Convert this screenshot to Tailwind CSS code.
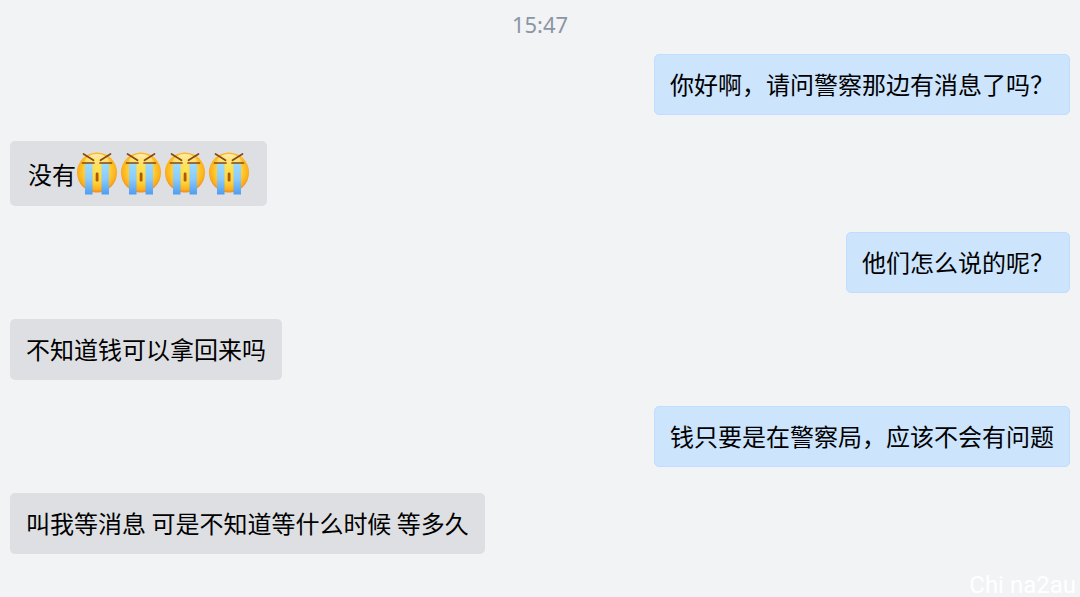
<!DOCTYPE html>
<html lang="zh-CN">
<head>
  <meta charset="utf-8">
  <meta name="viewport" content="width=device-width, initial-scale=1">
  <title>聊天</title>
  <script src="https://cdn.jsdelivr.net/npm/@tailwindcss/browser@4"></script>
</head>
<body class="bg-[#f2f3f5]">

  <!-- crying face, reused in messages -->
  <svg class="absolute w-0 h-0" aria-hidden="true">
    <defs>
      <radialGradient id="face" cx="50%" cy="45%" r="56%">
        <stop offset="0" stop-color="#ffe352"/>
        <stop offset="0.55" stop-color="#ffd136"/>
        <stop offset="0.85" stop-color="#fdb01c"/>
        <stop offset="1" stop-color="#ec841d"/>
      </radialGradient>
      <linearGradient id="shine" x1="0" y1="0" x2="0" y2="1">
        <stop offset="0" stop-color="#fffbe0" stop-opacity="0.75"/>
        <stop offset="1" stop-color="#fff3a0" stop-opacity="0"/>
      </linearGradient>
      <linearGradient id="tear" x1="0" y1="0" x2="0" y2="1">
        <stop offset="0" stop-color="#9cdcff"/>
        <stop offset="0.5" stop-color="#8bcbfb"/>
        <stop offset="1" stop-color="#4f9df0"/>
      </linearGradient>
      <symbol id="sob" viewBox="0 0 40 44">
        <circle cx="20" cy="20.5" r="20" fill="url(#face)"/>
        <ellipse cx="20" cy="10" rx="12" ry="8" fill="url(#shine)"/>
        <path d="M8 11h7.5v31.5H8zM24.5 11H32v31.5h-7.5z" fill="url(#tear)"/>
        <path d="M5.5 11H17M23 11H34.5M6.500 2L16.500 8.300M33.500 2L23.500 8.300" fill="none" stroke="#86490f" stroke-width="1.700" stroke-linecap="round"/>
        <rect x="18.700" y="20.500" width="2.800" height="9" rx="1.200" fill="#ad5808"/>
      </symbol>
    </defs>
  </svg>

  <main class="relative min-h-screen px-[10px] pt-2 pb-[43px] font-['Noto_Sans_CJK_SC',sans-serif] text-2xl text-black">
    <time class="block mb-[14px] text-center font-['Noto_Sans',sans-serif] text-[22px] leading-8 text-[#8c95a5]">15:47</time>

    <div class="flex flex-col items-start gap-[26px]">
      <p class="self-end px-[15px] pt-[13px] pb-[14px] leading-8 rounded-[5px] border border-[#c2dcff] bg-[#cce4fc]">你好啊，请问警察那边有消息了吗？</p>

      <p class="flex items-center gap-px px-[18px] py-[10px] leading-8 rounded-[5px] bg-[#dedfe3]">
        <span>没有</span>
        <span class="flex gap-1 pt-px" role="img" aria-label="大哭">
          <svg class="w-10 h-11"><use href="#sob"/></svg>
          <svg class="w-10 h-11"><use href="#sob"/></svg>
          <svg class="w-10 h-11"><use href="#sob"/></svg>
          <svg class="w-10 h-11"><use href="#sob"/></svg>
        </span>
      </p>

      <p class="self-end px-[15px] pt-[13px] pb-[14px] leading-8 rounded-[5px] border border-[#c2dcff] bg-[#cce4fc]">他们怎么说的呢？</p>

      <p class="px-4 pt-[14px] pb-[15px] leading-8 rounded-[5px] bg-[#dedfe3]">不知道钱可以拿回来吗</p>

      <p class="self-end px-[15px] pt-[13px] pb-[14px] leading-8 rounded-[5px] border border-[#c2dcff] bg-[#cce4fc]">钱只要是在警察局，应该不会有问题</p>

      <p class="px-4 pt-[14px] pb-[15px] leading-8 rounded-[5px] bg-[#dedfe3]">叫我等消息 可是不知道等什么时候 等多久</p>
    </div>

    <span class="absolute right-1 bottom-0 font-[Roboto,sans-serif] leading-6 text-white">Chi na2au</span>
  </main>

</body>
</html>
